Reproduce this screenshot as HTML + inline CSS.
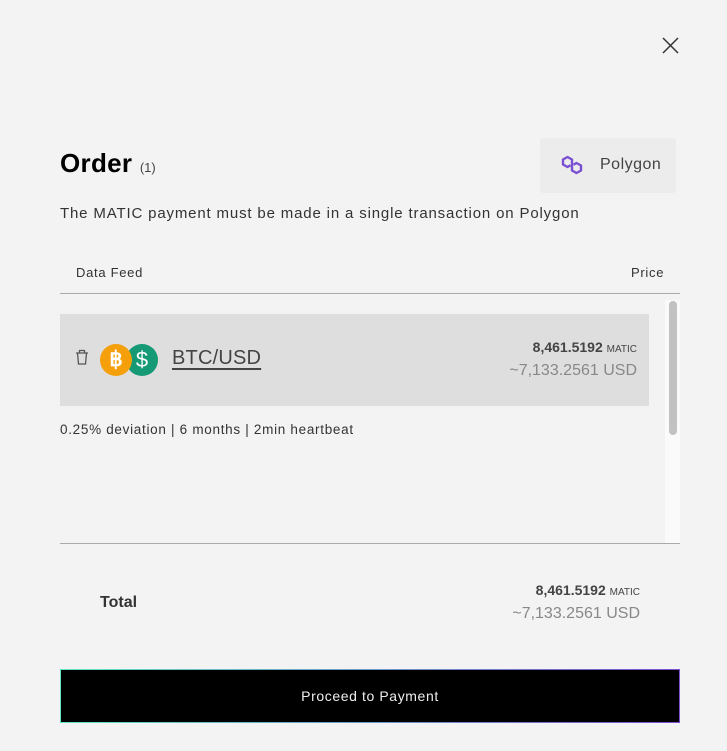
<!DOCTYPE html>
<html><head><meta charset="utf-8"><style>
*{margin:0;padding:0;box-sizing:border-box}
body{width:727px;height:751px;background:#f3f3f3;font-family:"Liberation Sans",sans-serif;position:relative;overflow:hidden;color:#333}
.a{position:absolute}
</style></head><body>
<svg class="a" style="left:661px;top:36px" width="19" height="19" viewBox="0 0 19 19"><path d="M2 2L17 17M17 2L2 17" stroke="#333" stroke-width="1.5"/></svg>
<div class="a" style="left:60px;top:148px;font-size:26px;font-weight:bold;color:#000;letter-spacing:0.3px">Order <span style="font-size:13px;font-weight:normal;color:#444;letter-spacing:0">(1)</span></div>
<div class="a" style="left:540px;top:138px;width:136px;height:55px;background:#ececec;border-radius:3px"></div>
<svg class="a" style="left:560px;top:153px" width="28" height="24" viewBox="0 0 28 24"><path d="M12 10V6.5L7.5 4L3 6.5V11.5L7.5 14L10.5 12.3" fill="none" stroke="#7b4fd1" stroke-width="2.4" stroke-linejoin="round"/><path d="M13.5 11.7L16.5 10L21 12.5V17.5L16.5 20L12 17.5V14" fill="none" stroke="#7b4fd1" stroke-width="2.4" stroke-linejoin="round"/><path d="M12 10V14" stroke="#7b4fd1" stroke-width="2.4"/></svg>
<div class="a" style="left:600px;top:156px;font-size:16px;color:#444;letter-spacing:0.5px">Polygon</div>
<div class="a" style="left:60px;top:205px;font-size:15px;color:#333;letter-spacing:0.84px">The MATIC payment must be made in a single transaction on Polygon</div>
<div class="a" style="left:76px;top:265px;font-size:13px;color:#333;letter-spacing:0.7px">Data Feed</div>
<div class="a" style="left:631px;top:265px;font-size:13px;color:#333;letter-spacing:0.7px">Price</div>
<div class="a" style="left:60px;top:293px;width:620px;height:1px;background:#aaa"></div>
<div class="a" style="left:665px;top:300px;width:15px;height:243px;background:#fafafa"></div>
<div class="a" style="left:669px;top:301px;width:8px;height:134px;background:#c2c2c2;border-radius:4px"></div>
<div class="a" style="left:60px;top:314px;width:589px;height:92px;background:#dedede"></div>
<svg class="a" style="left:74px;top:348px" width="16" height="18" viewBox="0 0 16 18"><path d="M2 5H14M5.5 5V2.5H10.5V5M3.5 5L4.5 16H11.5L12.5 5" fill="none" stroke="#555" stroke-width="1.3"/></svg>
<div class="a" style="left:126px;top:344px;width:32px;height:32px;border-radius:50%;background:#159a75;color:#fff;font-size:22px;text-align:center;line-height:32px">$</div>
<div class="a" style="left:100px;top:344px;width:32px;height:32px;border-radius:50%;background:#f5a00a;color:#fff;font-size:21px;font-weight:bold;text-align:center;line-height:32px">&#x0E3F;</div>
<div class="a" style="left:172px;top:347px;font-size:20px;color:#444;text-decoration:underline;text-underline-offset:4px;letter-spacing:0.2px">BTC/USD</div>
<div class="a" style="right:90px;top:339px;font-size:14px;font-weight:bold;color:#444">8,461.5192 <span style="font-size:10px;font-weight:normal">MATIC</span></div>
<div class="a" style="right:90px;top:362px;font-size:16px;color:#888">~7,133.2561 USD</div>
<div class="a" style="left:60px;top:422px;font-size:13.5px;color:#333;letter-spacing:0.7px">0.25% deviation | 6 months | 2min heartbeat</div>
<div class="a" style="left:60px;top:543px;width:620px;height:1px;background:#aaa"></div>
<div class="a" style="left:100px;top:594px;font-size:16px;font-weight:bold;color:#333">Total</div>
<div class="a" style="right:87px;top:582px;font-size:14px;font-weight:bold;color:#444">8,461.5192 <span style="font-size:10px;font-weight:normal">MATIC</span></div>
<div class="a" style="right:87px;top:605px;font-size:16px;color:#888">~7,133.2561 USD</div>
<div class="a" style="left:60px;top:669px;width:620px;height:54px;background:linear-gradient(90deg,#5fe3c0,#7b4fd1);padding:1px"><div style="width:100%;height:100%;background:#000;color:#eee;font-size:14px;text-align:center;line-height:52px;letter-spacing:0.6px">Proceed to Payment</div></div>
</body></html>
